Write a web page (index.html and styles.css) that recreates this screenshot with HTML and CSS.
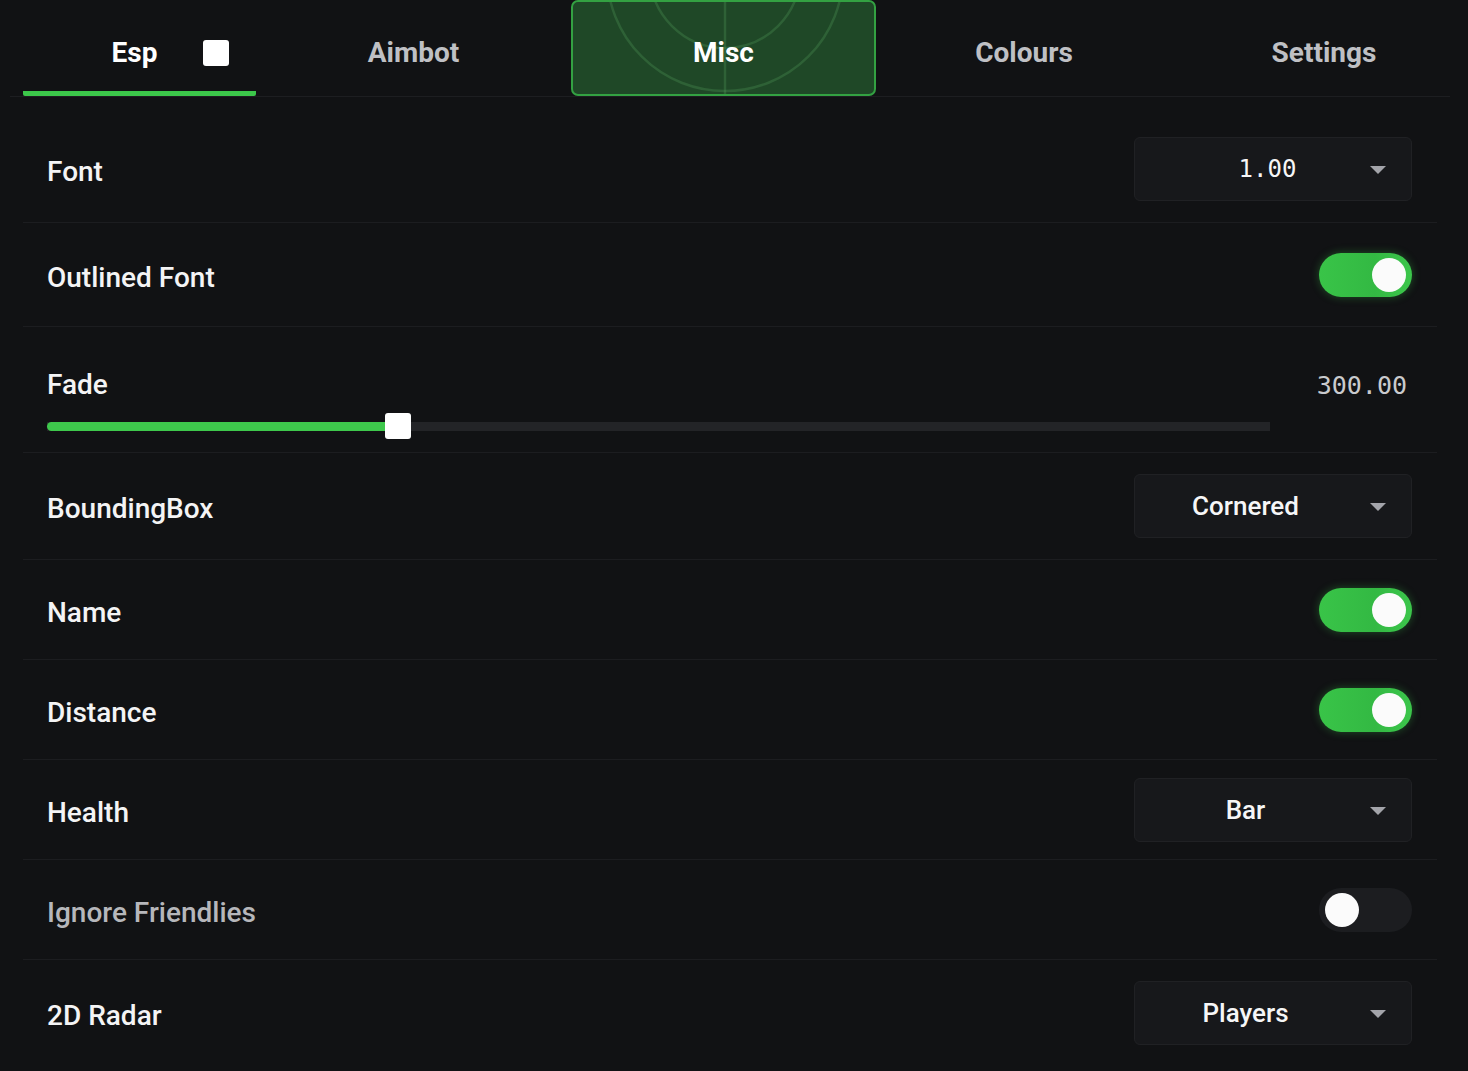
FILE: index.html
```html
<!DOCTYPE html>
<html lang="en">
  <head>
    <meta charset="UTF-8">
    <meta name="viewport" content="width=device-width, initial-scale=1.0">
    <title>Esp Settings</title>
    <link rel="stylesheet" href="styles.css">
  </head>
  <body>
    <div class="tabs">
      <div class="tab tab-esp active">Esp <span class="tab-box"></span></div>
      <div class="tab tab-aimbot">Aimbot</div>
      <div class="tab tab-misc selected">
        <svg class="radar" viewBox="0 0 305 96" width="305" height="96">
          <circle cx="154" cy="-27" r="118" />
          <circle cx="154" cy="-27" r="75" />
          <line x1="154" y1="0" x2="154" y2="96" />
        </svg>
        <span>Misc</span>
      </div>
      <div class="tab tab-colours">Colours</div>
      <div class="tab tab-settings">Settings</div>
    </div>

    <div class="list">
      <div class="row row-select">
        <span class="label">Font</span>
        <div class="select"><span class="select-text mono">1.00</span><span class="caret"></span></div>
      </div>
      <div class="row row-toggle tall">
        <span class="label">Outlined Font</span>
        <div class="toggle on"><span class="knob"></span></div>
      </div>
      <div class="row row-slider">
        <div class="slider-head">
          <span class="label">Fade</span>
          <span class="value mono">300.00</span>
        </div>
        <div class="slider">
          <div class="slider-fill" style="width: 28.7%"><span class="thumb"></span></div>
        </div>
      </div>
      <div class="row row-select">
        <span class="label">BoundingBox</span>
        <div class="select"><span class="select-text">Cornered</span><span class="caret"></span></div>
      </div>
      <div class="row row-toggle">
        <span class="label">Name</span>
        <div class="toggle on"><span class="knob"></span></div>
      </div>
      <div class="row row-toggle">
        <span class="label">Distance</span>
        <div class="toggle on"><span class="knob"></span></div>
      </div>
      <div class="row row-select tight">
        <span class="label">Health</span>
        <div class="select"><span class="select-text">Bar</span><span class="caret"></span></div>
      </div>
      <div class="row row-toggle">
        <span class="label dim">Ignore Friendlies</span>
        <div class="toggle"><span class="knob"></span></div>
      </div>
      <div class="row row-select">
        <span class="label">2D Radar</span>
        <div class="select"><span class="select-text">Players</span><span class="caret"></span></div>
      </div>
    </div>
  </body>
</html>
```

FILE: styles.css
```css
body {
  margin: 0;
  background: #111214;
  color: #f2f2f3;
  font-family: Roboto, "Liberation Sans", sans-serif;
  overflow: hidden;
}

.mono {
  font-family: "DejaVu Sans Mono", "Liberation Mono", monospace;
}

/* tabs */
.tabs {
  display: flex;
  margin: 0 18px 0 10px;
  height: 97px;
  border-bottom: 1px solid #1d1e21;
  box-sizing: border-box;
}
.tab {
  display: flex;
  align-items: center;
  justify-content: center;
  height: 96px;
  padding-top: 8px;
  box-sizing: border-box;
  font-size: 28px;
  font-weight: 700;
  color: #bfc0c4;
}
.tab-esp {
  position: relative;
  margin-left: 13px;
  width: 233px;
  padding-right: 10px;
  color: #fff;
  border-bottom: 5px solid #3cc74a;
  border-radius: 0 0 2px 2px;
  padding-top: 13px;
}
.tab-box {
  position: absolute;
  left: 180px;
  top: 40px;
  width: 26px;
  height: 26px;
  background: #fff;
  border-radius: 3px;
}
.tab-aimbot { width: 315px; }
.tab-misc {
  position: relative;
  width: 305px;
  color: #fff;
  background: #1f4827;
  border: 2px solid #33a142;
  border-radius: 7px;
  overflow: hidden;
}
.tab-misc span { position: relative; }
.radar {
  position: absolute;
  left: -2px;
  top: -2px;
  fill: none;
  stroke: rgba(90, 170, 100, 0.25);
  stroke-width: 2.5;
}
.tab-colours { width: 296px; }
.tab-settings { flex: 1; padding-left: 26px; }

/* rows */
.list {
  margin: 0 31px 0 23px;
  padding-top: 19px;
}
.row {
  display: flex;
  align-items: center;
  justify-content: space-between;
  padding: 0 25px 0 24px;
  border-bottom: 1px solid #1c1d20;
}
.row:last-child { border-bottom: none; }
.row-select { padding-top: 21px; padding-bottom: 21px; }
.row-select.tight { padding-top: 18px; padding-bottom: 17px; }
.row-toggle { padding-top: 28px; padding-bottom: 27px; }
.row-toggle.tall { padding-top: 30px; padding-bottom: 29px; }
.row-slider {
  display: block;
  padding-top: 42px;
  padding-bottom: 13px;
}

.label {
  font-size: 28px;
  font-weight: 500;
  color: #f4f4f5;
  line-height: 32px;
  padding-top: 6px;
}
.label.dim { color: #b6b7bb; }

/* dropdown */
.select {
  display: flex;
  align-items: center;
  width: 278px;
  height: 64px;
  box-sizing: border-box;
  background: #17181b;
  border: 1px solid #202124;
  border-radius: 6px;
}
.select-text {
  flex: 1;
  text-align: center;
  font-size: 26px;
  font-weight: 500;
  color: #f6f6f7;
}
.select-text.mono {
  font-size: 24px;
  padding-left: 44px;
}
.caret {
  width: 0;
  height: 0;
  margin: 2px 25px 0 14px;
  border-left: 8px solid transparent;
  border-right: 8px solid transparent;
  border-top: 8px solid #a3a4aa;
}

/* toggle */
.toggle {
  position: relative;
  width: 93px;
  height: 44px;
  border-radius: 22px;
  background: #1c1d20;
}
.toggle.on {
  background: linear-gradient(90deg, #39c448, #33b943 60%, #3cc64b);
  box-shadow: 0 0 8px rgba(60, 200, 75, 0.35);
}
.knob {
  position: absolute;
  top: 5px;
  left: 6px;
  width: 34px;
  height: 34px;
  border-radius: 50%;
  background: #fbfbfb;
}
.toggle.on .knob { left: auto; right: 6px; }

/* slider */
.slider-head {
  display: flex;
  justify-content: space-between;
  align-items: center;
}
.slider-head .label { padding-top: 0; }
.value {
  font-size: 25px;
  color: #c9cacd;
  margin-right: 5px;
}
.slider {
  margin: 12px 142px 0 0;
  height: 26px;
  display: flex;
  align-items: center;
  background: linear-gradient(#232427, #232427) center / 100% 9px no-repeat;
  border-radius: 5px;
}
.slider-fill {
  position: relative;
  height: 9px;
  background: #3ec84c;
  border-radius: 5px;
}
.thumb {
  position: absolute;
  right: -13px;
  top: -9px;
  width: 26px;
  height: 26px;
  background: #fff;
  border-radius: 3px;
}
```
